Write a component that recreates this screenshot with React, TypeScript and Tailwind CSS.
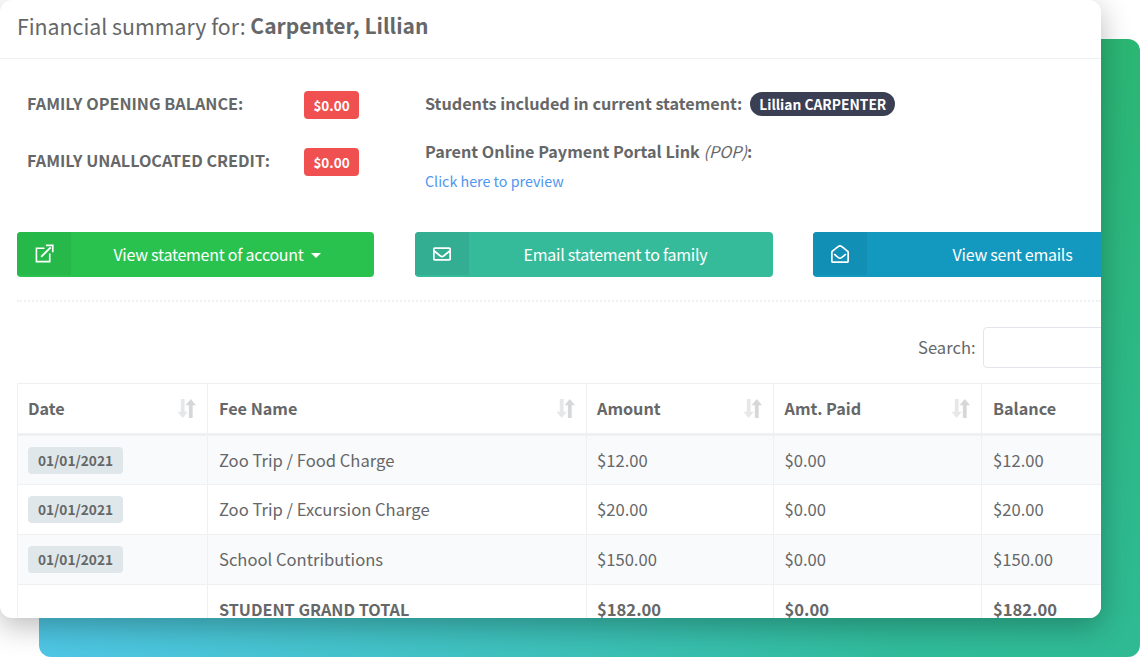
import { FaRegEnvelope, FaRegEnvelopeOpen } from "react-icons/fa";

function Sort() {
  return (
    <svg viewBox="0 0 20 22" className="h-[21px] w-[19px] shrink-0" fill="none">
      <path d="M6 1v15" stroke="#e6e7e9" strokeWidth="4" />
      <path d="M.5 14.5h11L6 21z" fill="#e6e7e9" />
      <path d="M14.5 21V6" stroke="#d6d7d9" strokeWidth="4" />
      <path d="M9 7.5h11L14.5 1z" fill="#d6d7d9" />
    </svg>
  );
}

function ExternalIcon() {
  return (
    <svg viewBox="0 0 20 20" className="h-[19px] w-[19px]" fill="none" stroke="white" strokeWidth="1.7">
      <path d="M10 4.5H1.5v14h14V10" />
      <path d="M6.5 13.5 16.5 3.5" strokeWidth="2" />
      <path d="M11.5 1.5h7.2v7.2" strokeWidth="1.8" />
    </svg>
  );
}

function ActionButton({ bg, dark, icon, label, caret, w, ml }: { bg: string; dark: string; icon: React.ReactNode; label: string; caret?: boolean; w: string; ml?: string }) {
  return (
    <div className={`flex h-[45px] shrink-0 items-stretch overflow-hidden rounded-[4px] text-white ${bg} ${w} ${ml ?? ""}`}>
      <div className={`mb-0.5 flex w-[54px] shrink-0 items-center justify-center ${dark}`}>{icon}</div>
      <div className="flex flex-1 items-center justify-center pb-px pr-[11px] text-[16px] tracking-[-0.25px]">
        {label}
        {caret && <span className="ml-[7px] mt-0.5 h-0 w-0 border-x-[5px] border-t-[5px] border-x-transparent border-t-white" />}
      </div>
    </div>
  );
}

const rows = [
  { name: "Zoo Trip / Food Charge", amt: "$12.00", bal: "$12.00", bg: "bg-[#f9fafb]" },
  { name: "Zoo Trip / Excursion Charge", amt: "$20.00", bal: "$20.00", bg: "bg-white" },
  { name: "School Contributions", amt: "$150.00", bal: "$150.00", bg: "bg-[#f9fafb]" },
];

const pads = ["pl-[10px]", "pl-[11px]", "pl-[10px]", "pl-[10.5px]", "pl-[11px]"];
const th = "h-[51px] border border-b-[3px] border-[#eff0f1] pr-[11px] text-left align-middle font-semibold";
const td = "h-[50px] border border-[#eff0f1] pr-[10px] align-middle";

export default function App() {
  return (
    <div className="relative h-[657px] w-[1140px] overflow-hidden bg-white text-[#666768] [font-family:'Noto_Sans_CJK_SC','Noto_Sans',sans-serif]">
      <div className="absolute left-[39px] top-[39px] h-[618px] w-[1101px] rounded-xl bg-gradient-to-tr from-[#4fc6e6] via-[#30bb9a] via-40% to-[#2bb673]" />
      <div className="relative h-[618px] w-[1101px] overflow-hidden rounded-xl bg-white shadow-[0_8px_30px_rgba(0,0,0,0.28)]">
        <div className="flex h-[59px] items-center border-b border-[#eff0f1] pb-[7px] pl-[17px]">
          <span className="text-[21.3px]">Financial summary for:&nbsp;</span>
          <span className="text-[21px] font-semibold">Carpenter, Lillian</span>
        </div>

        <div className="flex pl-[27px] pt-[31px] text-[16.2px] font-semibold">
          <div className="flex w-[398px] flex-col gap-[29px] pt-px">
            <div className="flex h-[28px] items-center">
              <span className="w-[277px] pb-[4px]">FAMILY OPENING BALANCE:</span>
              <span className="flex h-[28px] w-[55px] items-center justify-center rounded-[4px] bg-[#f05050] text-[13.5px] font-semibold text-white">$0.00</span>
            </div>
            <div className="flex h-[28px] items-center">
              <span className="w-[277px] pb-[3px]">FAMILY UNALLOCATED CREDIT:</span>
              <span className="flex h-[28px] w-[55px] items-center justify-center rounded-[4px] bg-[#f05050] text-[13.5px] font-semibold text-white">$0.00</span>
            </div>
          </div>
          <div className="flex flex-col">
            <div className="flex h-[28px] items-center">
              <span className="pb-[2px]">Students included in current statement:</span>
              <span className="ml-2 flex h-6 items-center rounded-full bg-[#3a3f54] px-[9px] text-[13.8px] text-white">Lillian CARPENTER</span>
            </div>
            <div className="mt-[21px] flex h-[24px] items-center">
              Parent Online Payment Portal Link&nbsp;<i className="font-normal">(POP)</i>:
            </div>
            <div className="mt-[6px] flex h-[24px] items-center text-[14.3px] font-normal text-[#4f96ee]">Click here to preview</div>
          </div>
        </div>

        <div className="ml-[17px] mt-[39px] flex">
          <ActionButton bg="bg-[#2ac24f]" dark="bg-[#27b84a]" icon={<ExternalIcon />} label="View statement of account" caret w="w-[357px]" />
          <ActionButton bg="bg-[#36bb9a]" dark="bg-[#33ae93]" icon={<FaRegEnvelope className="h-[18px] w-[18px]" />} label="Email statement to family" w="w-[358px]" ml="ml-[41px]" />
          <ActionButton bg="bg-[#1398c0]" dark="bg-[#128fb5]" icon={<FaRegEnvelopeOpen className="h-[18px] w-[18px]" />} label="View sent emails" w="w-[356px]" ml="ml-[40px]" />
        </div>

        <div className="ml-[17px] mt-[23px] border-t-2 border-dotted border-[#eff0f1]" />

        <div className="mt-[25px] flex h-[41px] items-center pl-[918px] text-[16.6px]">
          <span>Search:</span>
          <div className="ml-[7px] h-[41px] w-[200px] shrink-0 rounded-[4px] border border-[#e2e5ec] bg-white" />
        </div>

        <table className="ml-[17px] mt-[15px] w-[1200px] table-fixed border-collapse text-[16.6px]">
          <colgroup>
            <col className="w-[190px]" />
            <col className="w-[379px]" />
            <col className="w-[187px]" />
            <col className="w-[208px]" />
            <col className="w-[236px]" />
          </colgroup>
          <thead>
            <tr>
              {["Date", "Fee Name", "Amount", "Amt. Paid", "Balance"].map((h, i) => (
                <th key={h} className={`${th} ${pads[i]}`}>
                  <div className="flex items-center justify-between">
                    <span className="text-[16.2px]">{h}</span>
                    {i < 4 && <Sort />}
                  </div>
                </th>
              ))}
            </tr>
          </thead>
          <tbody>
            {rows.map((r) => (
              <tr key={r.name} className={r.bg}>
                <td className={`${td} ${pads[0]}`}>
                  <span className="inline-flex h-[27px] w-[95px] items-center justify-center rounded-[4px] bg-[#dfe7ea] text-[13.7px] font-semibold">01/01/2021</span>
                </td>
                <td className={`${td} ${pads[1]}`}>{r.name}</td>
                <td className={`${td} ${pads[2]}`}>{r.amt}</td>
                <td className={`${td} ${pads[3]}`}>$0.00</td>
                <td className={`${td} ${pads[4]}`}>{r.bal}</td>
              </tr>
            ))}
            <tr className="bg-white font-semibold">
              <td className={`${td} ${pads[0]}`}></td>
              <td className={`${td} ${pads[1]}`}><span className="text-[16.2px]">STUDENT GRAND TOTAL</span></td>
              <td className={`${td} ${pads[2]}`}>$182.00</td>
              <td className={`${td} ${pads[3]}`}>$0.00</td>
              <td className={`${td} ${pads[4]}`}>$182.00</td>
            </tr>
          </tbody>
        </table>
      </div>
    </div>
  );
}
